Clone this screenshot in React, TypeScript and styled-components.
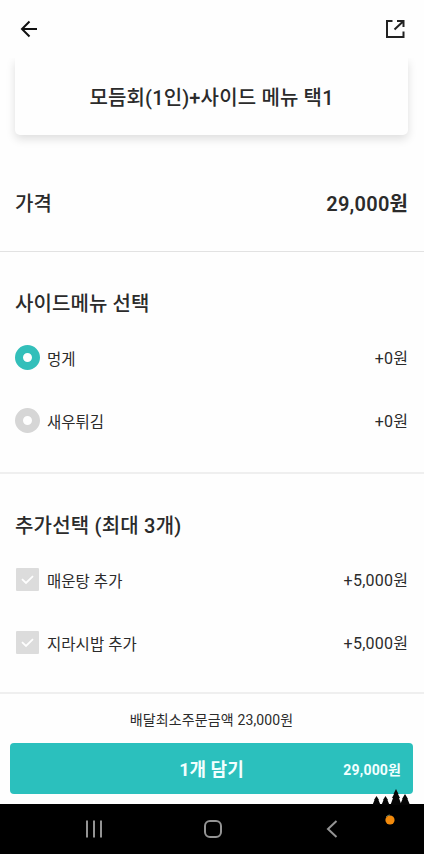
import React from "react";
import styled, { createGlobalStyle } from "styled-components";

const GlobalStyle = createGlobalStyle`
  * { box-sizing: border-box; }
  body {
    margin: 0;
    background: #fefefe;
    color: #2b2b2b;
    font-family: Roboto, "Noto Sans CJK KR", sans-serif;
  }
`;

const Screen = styled.div`
  display: flex;
  flex-direction: column;
  width: 424px;
  height: 854px;
  overflow: hidden;
  background: #fefefe;
`;

const Header = styled.header`
  display: flex;
  flex: none;
  justify-content: space-between;
  align-items: center;
  height: 58px;
  padding: 0 19px 0 18px;
  background: #fefefe;
  z-index: 1;
`;

const TitleCard = styled.section`
  display: flex;
  flex: none;
  align-items: center;
  justify-content: center;
  height: 77px;
  margin: 0 16px 0 15px;
  padding-top: 2px;
  border-radius: 0 0 5px 5px;
  background: #fefefe;
  box-shadow: 0 4px 10px rgba(0, 0, 0, 0.13);
`;

const Text = styled.span<{ $size: number; $weight?: number; $spacing?: number }>`
  margin-right: ${(p) => -(p.$spacing ?? 0)}px;
  font-size: ${(p) => p.$size}px;
  font-weight: ${(p) => p.$weight ?? 400};
  letter-spacing: ${(p) => p.$spacing ?? 0}px;
  line-height: 24px;
  white-space: pre;
`;

const PriceRow = styled.section`
  display: flex;
  flex: none;
  justify-content: space-between;
  align-items: center;
  height: 117px;
  padding: 21px 16px 0 15px;
  border-bottom: 1px solid #e2e2e2;
`;

const OptionGroup = styled.section<{ $height: number }>`
  flex: none;
  height: ${(p) => p.$height}px;
  padding: 40px 16px 0 15px;
  border-bottom: 2px solid #efefef;
`;

const GroupTitle = styled.h2`
  display: flex;
  margin: 0 0 10px;
  height: 24px;
`;

const OptionRow = styled.div`
  display: flex;
  align-items: center;
  height: 63px;
`;

const OptionLabel = styled.div`
  flex: 1;
  display: flex;
  padding: 4px 0 0 7px;
`;

const OptionPrice = styled.div`
  display: flex;
  padding-top: 3px;
`;

const Radio = styled.span<{ $on?: boolean }>`
  width: 25px;
  height: 25px;
  border-radius: 50%;
  border: 8px solid ${(p) => (p.$on ? "#33bfba" : "#d6d6d6")};
  background: #fefefe;
`;

const Check = styled.span`
  display: flex;
  align-items: center;
  justify-content: center;
  width: 23px;
  height: 23px;
  margin: 0 1px;
  border-radius: 1px;
  background: #dcdcdc;
`;

const Footer = styled.footer`
  display: flex;
  flex: 1;
  flex-direction: column;
  align-items: center;
  padding: 14px 11px 0 10px;
`;

const OrderButton = styled.button`
  display: grid;
  grid-template-columns: 1fr auto 1fr;
  align-items: center;
  width: 100%;
  height: 51px;
  margin-top: 11px;
  padding: 2px 12px 0;
  border: 0;
  border-radius: 4px;
  background: #2bc0bd;
  color: #f2ffff;
  font-family: inherit;
`;

const ButtonPrice = styled.div`
  display: flex;
  justify-content: flex-end;
`;

const NavBar = styled.nav`
  position: relative;
  display: grid;
  flex: none;
  align-items: center;
  grid-template-columns: 109px 109px auto;
  height: 50px;
  padding: 0 0 0 85px;
  background: #000;
`;

const HomeIcon = styled.svg`
  margin-left: 9px;
`;

const BackIcon = styled.svg`
  margin-left: 23px;
`;

const Forest = styled.svg`
  position: absolute;
  right: 12px;
  top: -16px;
`;

const CheckMark = () => (
  <Check>
    <svg width="13" height="10" viewBox="0 0 13 10" fill="none" stroke="#fefefe" strokeWidth="1.8">
      <path d="M1 4.200 L5 8 L12 1.200" />
    </svg>
  </Check>
);

const sides = [
  { name: "멍게", price: "+0원", on: true },
  { name: "새우튀김", price: "+0원", on: false },
];
const extras = [
  { name: "매운탕 추가", price: "+5,000원" },
  { name: "지라시밥 추가", price: "+5,000원" },
];

export default function App() {
  return (
    <Screen>
      <GlobalStyle />
      <Header>
        <svg width="20" height="20" viewBox="0 0 20 20" fill="none" stroke="#111" strokeWidth="2">
          <path d="M19 10 H4 M11.500 2.500 L4 10 L11.500 17.500" />
        </svg>
        <svg width="20" height="20" viewBox="0 0 20 20" fill="none" stroke="#222" strokeWidth="2">
          <path d="M7.500 2 H2 V18 H18.500 V12.500 M12 2 H18.500 V8 M18 2.500 L9.500 10.500" />
        </svg>
      </Header>
      <TitleCard>
        <Text $size={20} $weight={500} $spacing={0.15}>모듬회(1인)+사이드 메뉴 택1</Text>
      </TitleCard>
      <PriceRow>
        <Text $size={20} $weight={500}>가격</Text>
        <Text $size={20} $weight={600} $spacing={0.25}>29,000원</Text>
      </PriceRow>
      <OptionGroup $height={222}>
        <GroupTitle><Text $size={20} $weight={500} $spacing={0.1}>사이드메뉴 선택</Text></GroupTitle>
        {sides.map((s) => (
          <OptionRow key={s.name}>
            <Radio $on={s.on} />
            <OptionLabel><Text $size={15.5}>{s.name}</Text></OptionLabel>
            <OptionPrice><Text $size={16} $spacing={0.2}>{s.price}</Text></OptionPrice>
          </OptionRow>
        ))}
      </OptionGroup>
      <OptionGroup $height={220}>
        <GroupTitle><Text $size={20} $weight={500} $spacing={0.2}>추가선택 (최대 3개)</Text></GroupTitle>
        {extras.map((e) => (
          <OptionRow key={e.name}>
            <CheckMark />
            <OptionLabel><Text $size={15.5} $spacing={0.05}>{e.name}</Text></OptionLabel>
            <OptionPrice><Text $size={16} $spacing={0.25}>{e.price}</Text></OptionPrice>
          </OptionRow>
        ))}
      </OptionGroup>
      <Footer>
        <Text $size={14} $spacing={0.12}>배달최소주문금액 23,000원</Text>
        <OrderButton>
          <span />
          <Text $size={18} $weight={700}>1개 담기</Text>
          <ButtonPrice><Text $size={14} $weight={700} $spacing={0.2}>29,000원</Text></ButtonPrice>
        </OrderButton>
      </Footer>
      <NavBar>
        <svg width="18" height="18" viewBox="0 0 18 18" stroke="#949494" strokeWidth="2">
          <path d="M2 0.500 V17.500 M9 0.500 V17.500 M16 0.500 V17.500" />
        </svg>
        <HomeIcon width="20" height="20" viewBox="0 0 20 20" fill="none" stroke="#949494" strokeWidth="2">
          <rect x="2" y="2" width="16" height="16" rx="5" />
        </HomeIcon>
        <BackIcon width="12" height="18" viewBox="0 0 12 18" fill="none" stroke="#949494" strokeWidth="2">
          <path d="M10.500 1 L2 9 L10.500 17" />
        </BackIcon>
        <Forest width="42" height="42" viewBox="0 0 42 42">
          <g fill="#050505">
            <path d="M6.500 8 L9 12 H8.500 L10.500 17 H2.500 L4.500 12 H4 Z" />
            <path d="M15.500 8 L18 12 H17.500 L19.500 17 H11.500 L13.500 12 H13 Z" />
            <path d="M26 1 L28.500 6 H28 L30 10 H29 L31.500 17 H20.500 L23 10 H22 L24 6 H23.500 Z" />
            <path d="M35 6 L38 11 H37.500 L40 17 H30 L32.500 11 H32 Z" />
          </g>
          <circle cx="20" cy="32" r="4.600" fill="#f28a0c" />
          <path d="M16 29 A5 5 0 0 1 20 27" fill="none" stroke="#6b7a5c" strokeWidth="1" />
        </Forest>
      </NavBar>
    </Screen>
  );
}
